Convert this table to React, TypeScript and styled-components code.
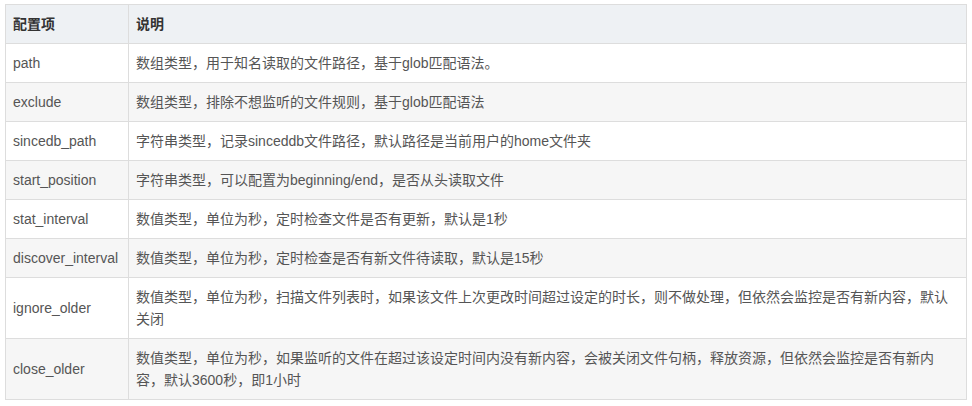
import styled, { createGlobalStyle } from 'styled-components'

const GlobalStyle = createGlobalStyle`
  html, body {
    margin: 0;
    padding: 0;
    background: #fff;
  }
  body {
    font-family: "Liberation Sans", Arial, "Noto Sans CJK SC", sans-serif;
  }
`

const Page = styled.div`
  padding: 4px 5px;
`

const Table = styled.table`
  width: 962px;
  border-collapse: collapse;
  table-layout: fixed;
  font-size: 14px;
  line-height: 22px;
  color: #555;
`

const HeadCell = styled.th`
  border: 1px solid #ddd;
  background: #eef1f4;
  color: #333;
  font-weight: bold;
  text-align: left;
  padding: 8px 7px;
`

const Row = styled.tr<{ $striped: boolean }>`
  background: ${(p) => (p.$striped ? '#f6f6f6' : '#fff')};
`

const Cell = styled.td`
  border: 1px solid #ddd;
  padding: 8px 7px;
  vertical-align: middle;
`

const rows: [string, string][] = [
  ['path', '数组类型，用于知名读取的文件路径，基于glob匹配语法。'],
  ['exclude', '数组类型，排除不想监听的文件规则，基于glob匹配语法'],
  ['sincedb_path', '字符串类型，记录sinceddb文件路径，默认路径是当前用户的home文件夹'],
  ['start_position', '字符串类型，可以配置为beginning/end，是否从头读取文件'],
  ['stat_interval', '数值类型，单位为秒，定时检查文件是否有更新，默认是1秒'],
  ['discover_interval', '数值类型，单位为秒，定时检查是否有新文件待读取，默认是15秒'],
  [
    'ignore_older',
    '数值类型，单位为秒，扫描文件列表时，如果该文件上次更改时间超过设定的时长，则不做处理，但依然会监控是否有新内容，默认关闭',
  ],
  [
    'close_older',
    '数值类型，单位为秒，如果监听的文件在超过该设定时间内没有新内容，会被关闭文件句柄，释放资源，但依然会监控是否有新内容，默认3600秒，即1小时',
  ],
]

export default function App() {
  return (
    <Page>
      <GlobalStyle />
      <Table>
        <colgroup>
          <col style={{ width: 123 }} />
          <col />
        </colgroup>
        <thead>
          <tr>
            <HeadCell>配置项</HeadCell>
            <HeadCell>说明</HeadCell>
          </tr>
        </thead>
        <tbody>
          {rows.map(([key, desc], i) => (
            <Row key={key} $striped={i % 2 === 1}>
              <Cell>{key}</Cell>
              <Cell>{desc}</Cell>
            </Row>
          ))}
        </tbody>
      </Table>
    </Page>
  )
}
